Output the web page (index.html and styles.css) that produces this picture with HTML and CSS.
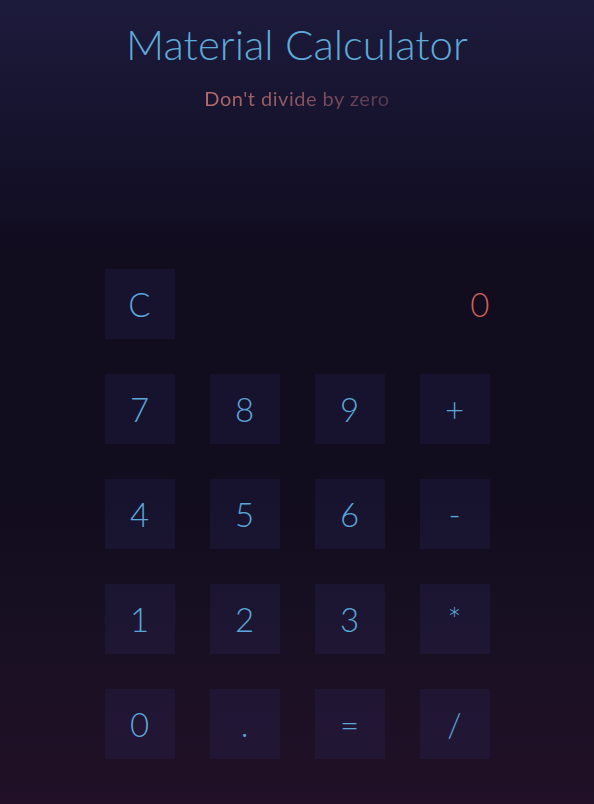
FILE: index.html
```html
<!DOCTYPE html>
<html lang="en">
<head>
<meta charset="utf-8">
<title>Material Calculator</title>
<link rel="stylesheet" href="styles.css">
</head>
<body>
<main class="app">
  <header class="head">
    <h1 class="title">Material Calculator</h1>
    <p class="subtitle">Don't divide by zero</p>
  </header>
  <section class="calc">
    <button class="key">C</button>
    <div class="display">0</div>
    <button class="key">7</button>
    <button class="key">8</button>
    <button class="key">9</button>
    <button class="key">+</button>
    <button class="key">4</button>
    <button class="key">5</button>
    <button class="key">6</button>
    <button class="key">-</button>
    <button class="key">1</button>
    <button class="key">2</button>
    <button class="key">3</button>
    <button class="key">*</button>
    <button class="key">0</button>
    <button class="key">.</button>
    <button class="key">=</button>
    <button class="key">/</button>
  </section>
</main>
</body>
</html>
```
FILE: styles.css
```css
html, body {
  margin: 0;
  padding: 0;
  height: 100%;
}
body {
  background: linear-gradient(180deg, #1d1b3c 0%, #14112a 20%, #110c1e 32%, #110c1e 62%, #1a1024 82%, #211027 100%);
  font-family: Lato, "Open Sans", sans-serif;
  color: #5aa6d8;
  min-height: 804px;
}
.app {
  display: flex;
  flex-direction: column;
  align-items: center;
}
.head {
  display: flex;
  flex-direction: column;
  align-items: center;
}
.title {
  margin: 18px 0 0;
  font-weight: 300;
  font-size: 42px;
  line-height: 52px;
  color: #5eaad8;
}
.subtitle {
  margin: 16px 0 0;
  font-size: 20px;
  line-height: 24px;
  letter-spacing: 0.5px;
  font-weight: 400;
  background: linear-gradient(90deg, #b86c6c 0%, #8a5560 50%, #52384e 100%);
  -webkit-background-clip: text;
  background-clip: text;
  color: transparent;
}
.calc {
  margin-top: 159px;
  display: grid;
  grid-template-columns: repeat(4, 70px);
  grid-auto-rows: 70px;
  gap: 35px;
}
.key {
  border: 0;
  padding: 0;
  background: rgba(52, 52, 115, 0.2);
  color: #5aa6d8;
  font-family: Lato, "Open Sans", sans-serif;
  font-weight: 300;
  font-size: 33px;
  display: flex;
  align-items: center;
  justify-content: center;
}
.display {
  grid-column: 2 / 5;
  display: flex;
  align-items: center;
  justify-content: flex-end;
  color: #d0605a;
  font-weight: 300;
  font-size: 33px;
}
```
